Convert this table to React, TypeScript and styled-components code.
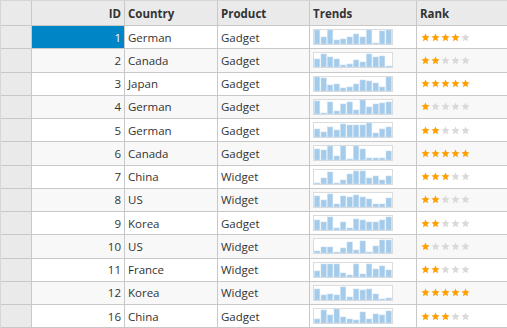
import styled, { createGlobalStyle } from "styled-components";

const GlobalStyle = createGlobalStyle`
  body {
    margin: 0;
    background: #fff;
    font-family: "Open Sans", "Noto Sans", sans-serif;
    font-size: 11.5px;
    color: #333;
  }
`;

const COLUMNS = "31px 93px 93px 92px 107px 120px";

const GridFrame = styled.div`
  width: 507px;
  height: 328px;
  overflow: hidden;
  border-top: 1px solid #d6d6d6;
  border-left: 1px solid #d6d6d6;
  box-sizing: border-box;
`;

const Row = styled.div<{ $header?: boolean; $alt?: boolean }>`
  display: grid;
  grid-template-columns: ${COLUMNS};
  height: ${(p) => (p.$header ? "25px" : "23.25px")};
  background: ${(p) => (p.$header ? "#eaeaea" : p.$alt ? "#f8f8f8" : "#fff")};
  font-weight: ${(p) => (p.$header ? 700 : 400)};
`;

const Cell = styled.div<{ $align?: "left" | "right"; $selected?: boolean }>`
  display: flex;
  align-items: center;
  justify-content: ${(p) => (p.$align === "right" ? "flex-end" : "flex-start")};
  padding: 0 3px;
  border-right: 1px solid #c8c8c8;
  border-bottom: 1px solid #c8c8c8;
  box-sizing: border-box;
  white-space: nowrap;
  overflow: hidden;
  background: ${(p) => (p.$selected ? "#0085c7" : "transparent")};
  color: ${(p) => (p.$selected ? "#fff" : "inherit")};
`;

const RowHeader = styled(Cell)`
  background: #eaeaea;
`;

const LastCell = styled(Cell)`
  border-right: none;
`;

const Stars = styled.div`
  display: flex;
  gap: 1px;
  padding-left: 1px;
`;

type Item = {
  id: number;
  country: string;
  product: string;
  trend: number[];
  rank: number;
};

const data: Item[] = [
  { id: 1, country: "German", product: "Gadget", rank: 4, trend: [1, 0.5, 1, 0.3, 0.33, 0.52, 0.68, 0.52, 1, 0.05, 0.9, 1] },
  { id: 2, country: "Canada", product: "Gadget", rank: 2, trend: [0.55, 0.95, 0.7, 0.55, 0.15, 0.2, 0.5, 0.35, 0.95, 0.7, 0.8, 0.08] },
  { id: 3, country: "Japan", product: "Gadget", rank: 5, trend: [1, 0.95, 0.4, 0.5, 0.2, 0.3, 0.5, 0.8, 0.7, 0.55, 0.25, 1] },
  { id: 4, country: "German", product: "Gadget", rank: 1, trend: [0.9, 0.1, 0.85, 0.2, 0.7, 0.85, 0.25, 1, 0.5, 0.7, 0.75, 0.85] },
  { id: 5, country: "German", product: "Gadget", rank: 2, trend: [0.55, 0.35, 0.7, 0.48, 0.9, 0.87, 0.87, 0.85, 1, 0.3, 0.55, 0.7] },
  { id: 6, country: "Canada", product: "Gadget", rank: 5, trend: [0.8, 0.72, 1, 0.25, 1, 0.08, 1, 0.75, 0.12, 0.17, 0.12, 0.65] },
  { id: 7, country: "China", product: "Widget", rank: 3, trend: [0, 0.4, 0.85, 0.08, 0.3, 0.7, 0.95, 0.95, 0.4, 0.55, 0.3, 0.55] },
  { id: 8, country: "US", product: "Widget", rank: 2, trend: [0.8, 0.48, 0.95, 0.2, 0.75, 0.7, 0.88, 0.73, 0.6, 0.2, 0.2, 0.65] },
  { id: 9, country: "Korea", product: "Gadget", rank: 2, trend: [0.7, 0.55, 0.95, 0.12, 0.55, 0.17, 0.82, 0.7, 0.6, 0.6, 0.72, 0.95] },
  { id: 10, country: "US", product: "Widget", rank: 1, trend: [0.17, 0.42, 0.42, 0.04, 0.35, 0.8, 0.2, 0.88, 0.04, 0.48, 0.95, 0.95] },
  { id: 11, country: "France", product: "Widget", rank: 2, trend: [0.45, 0.95, 0.9, 0.95, 0.25, 0.15, 0.9, 0.2, 0.9, 0.58, 0.8, 0.5] },
  { id: 12, country: "Korea", product: "Widget", rank: 5, trend: [0.75, 0.35, 0.42, 0.35, 0.93, 0.22, 0.75, 0.68, 0.8, 0.45, 0.07, 0.15] },
  { id: 16, country: "China", product: "Gadget", rank: 3, trend: [0.3, 0.9, 0.55, 1, 0.42, 0.27, 0.22, 0.77, 0.28, 0.63, 0.6, 0.87] },
];

function Sparkline({ values }: { values: number[] }) {
  const w = 80;
  const h = 16;
  const inner = h - 2;
  const step = (w - 2) / values.length;
  return (
    <svg width={w} height={h} style={{ display: "block" }}>
      <rect x={0.5} y={0.5} width={w - 1} height={h - 1} fill="#fff" stroke="#dcdcdc" />
      {values.map((v, i) => {
        const bh = Math.max(1, Math.round(v * inner));
        return (
          <rect
            key={i}
            x={1 + i * step + 0.5}
            y={h - 1 - bh}
            width={step - 1.2}
            height={bh}
            fill="#a5cbeb"
            stroke="#c3ddf2"
            strokeWidth={0.6}
          />
        );
      })}
    </svg>
  );
}

function Star({ on }: { on: boolean }) {
  return (
    <svg width={9} height={9} viewBox="0 0 24 24" style={{ display: "block" }}>
      <polygon
        points="12,1 15.1,8.3 23,9 17,14.2 18.8,22 12,17.9 5.2,22 7,14.2 1,9 8.9,8.3"
        fill={on ? "#ff9f00" : "#d9d9d9"}
      />
    </svg>
  );
}

export default function App() {
  return (
    <>
      <GlobalStyle />
      <GridFrame>
        <Row $header>
          <RowHeader />
          <Cell $align="right">ID</Cell>
          <Cell>Country</Cell>
          <Cell>Product</Cell>
          <Cell>Trends</Cell>
          <LastCell>Rank</LastCell>
        </Row>
        {data.map((item, i) => (
          <Row key={item.id} $alt={i % 2 === 1}>
            <RowHeader />
            <Cell $align="right" $selected={i === 0}>
              {item.id}
            </Cell>
            <Cell>{item.country}</Cell>
            <Cell>{item.product}</Cell>
            <Cell>
              <Sparkline values={item.trend} />
            </Cell>
            <LastCell>
              <Stars>
                {[1, 2, 3, 4, 5].map((n) => (
                  <Star key={n} on={n <= item.rank} />
                ))}
              </Stars>
            </LastCell>
          </Row>
        ))}
      </GridFrame>
    </>
  );
}
